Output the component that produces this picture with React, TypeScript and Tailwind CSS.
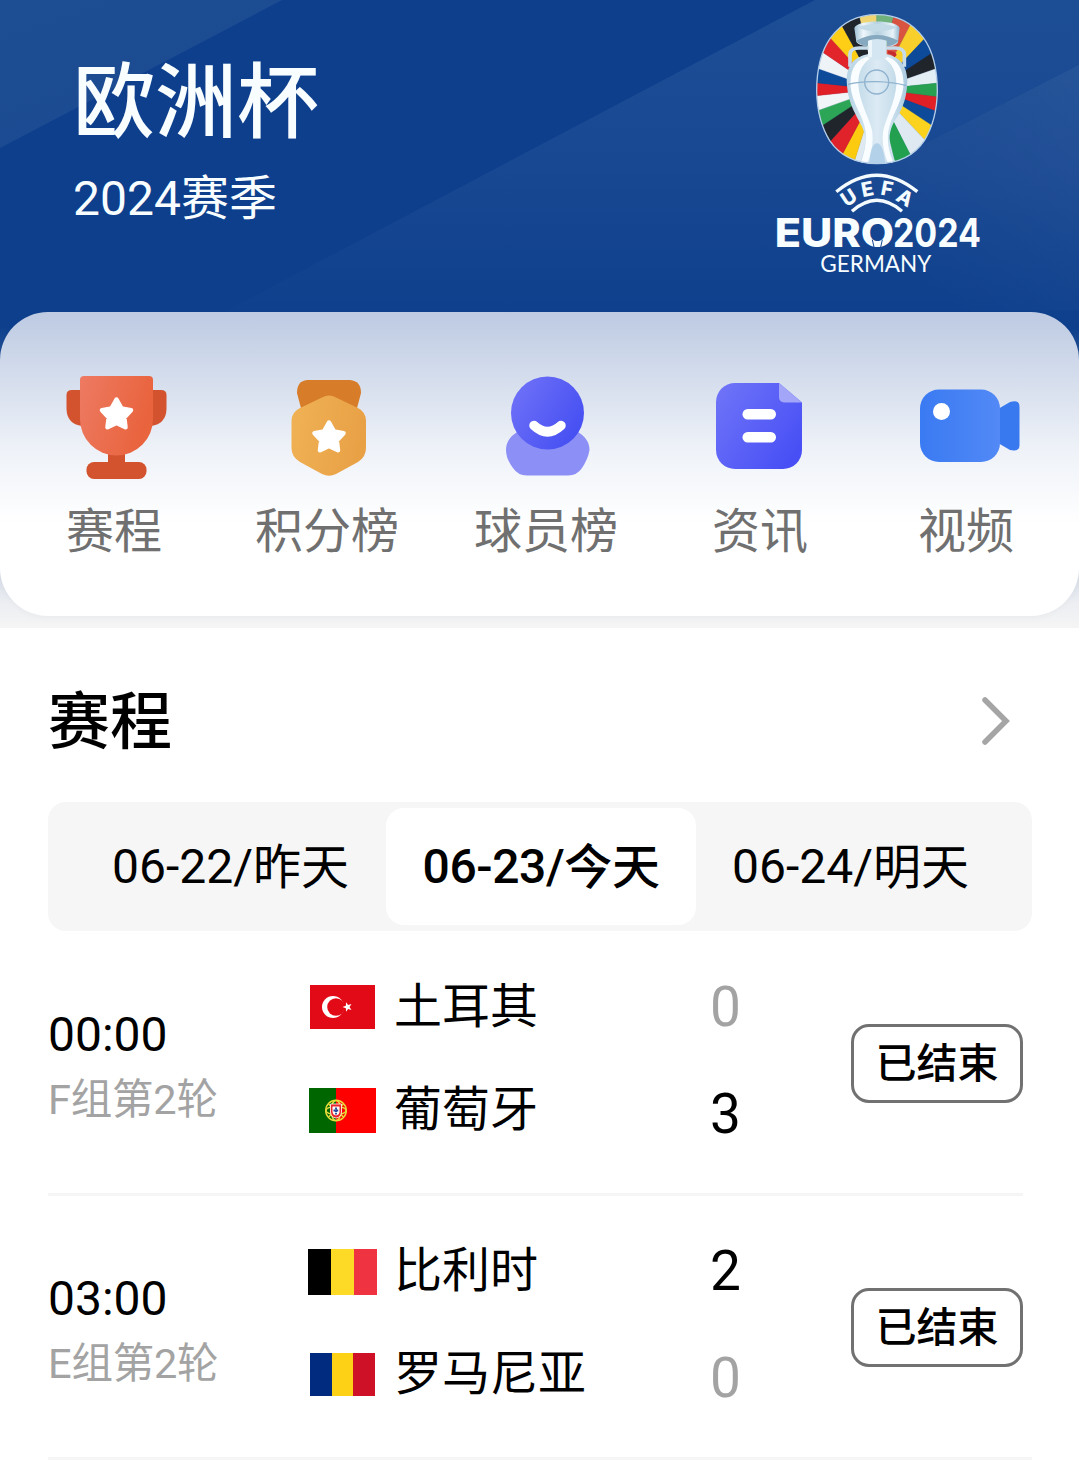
import type { ReactNode } from "react";

type Team = { name: string; score: number; flag: ReactNode };

type Match = {
  time: string;
  round: string;
  teams: Team[];
};

const STAR =
  "M0 -14.5 L4.9 -5.6 L14.5 -3.8 L7.8 3.4 L9 13.2 L0 9 L-9 13.2 L-7.8 3.4 L-14.5 -3.8 L-4.9 -5.6 Z";

function Star({ x, y }: { x: number; y: number }) {
  return (
    <path
      d={STAR}
      transform={`translate(${x} ${y})`}
      fill="#fff"
      stroke="#fff"
      strokeWidth="4.5"
      strokeLinejoin="round"
    />
  );
}

function TrophyIcon() {
  return (
    <svg className="h-[110px] w-[102px]" viewBox="66 372 102 110">
      <defs>
        <linearGradient id="cup" x1="0" y1="0" x2="1" y2="0.3">
          <stop offset="0" stopColor="#ed7a62" />
          <stop offset="1" stopColor="#e9633d" />
        </linearGradient>
      </defs>
      <rect x="108" y="450" width="17" height="16" fill="#d3532f" />
      <rect x="86.5" y="462" width="60" height="17" rx="7.5" fill="#d3532f" />
      <path d="M82 390 H72 Q66.500 390 66.500 395 V409 Q67 424 82 426 Z" fill="#d3532f" />
      <path d="M151 390 H161 Q166.500 390 166.500 395 V409 Q166 424 151 426 Z" fill="#d3532f" />
      <path d="M84 376 H149 a4 4 0 0 1 4 4 V419 a36.500 36.500 0 0 1 -73 0 V380 a4 4 0 0 1 4 -4 Z" fill="url(#cup)" />
      <Star x={116.5} y={414} />
    </svg>
  );
}

function MedalIcon() {
  return (
    <svg className="ml-[35px] h-[110px] w-[77px]" viewBox="290 372 77 110">
      <defs>
        <linearGradient id="medal" x1="0" y1="0" x2="1" y2="0.2">
          <stop offset="0" stopColor="#f0b255" />
          <stop offset="1" stopColor="#e9a146" />
        </linearGradient>
      </defs>
      <path d="M307 380 H350 Q361 381 361 393 L356 412 H302 L297 393 Q297 381 307 380 Z" fill="#d77c29" />
      <path
        d="M322 397.500 Q329 393.500 336 397.500 L358 408 Q366 412 366 421 V448 Q366 457 358 462 L336 474 Q329 477.500 322 474 L300 462 Q291.500 457 291.500 448 V421 Q291.500 412 300 408 Z"
        fill="url(#medal)"
      />
      <Star x={329} y={437} />
    </svg>
  );
}

function PlayerIcon() {
  return (
    <svg className="ml-[31px] h-[110px] w-[85px]" viewBox="505 372 85 110">
      <defs>
        <linearGradient id="face" x1="0" y1="0" x2="1" y2="0.6">
          <stop offset="0" stopColor="#7274f8" />
          <stop offset="1" stopColor="#4750f2" />
        </linearGradient>
      </defs>
      <path
        d="M519 431 H576 Q589.500 438 589.500 450 Q588 459 582 468 Q577 475.500 568 475.500 H527 Q518 475.500 513 468 Q506 459 506 450 Q506 438 519 431 Z"
        fill="#8c8ff6"
      />
      <circle cx="547.500" cy="413" r="36.500" fill="url(#face)" />
      <path d="M534 425.500 Q547.500 438 561 425.500" fill="none" stroke="#fff" strokeWidth="9.500" strokeLinecap="round" />
    </svg>
  );
}

function NewsIcon() {
  return (
    <svg className="ml-[3px] h-[110px] w-[88px]" viewBox="715 372 88 110">
      <defs>
        <linearGradient id="page" x1="0" y1="0" x2="1" y2="0.7">
          <stop offset="0" stopColor="#7175f8" />
          <stop offset="1" stopColor="#4850f5" />
        </linearGradient>
      </defs>
      <path d="M735 383 H779 L802 402.500 V450 a19 19 0 0 1 -19 19 H735 a19 19 0 0 1 -19 -19 V402 a19 19 0 0 1 19 -19 Z" fill="url(#page)" />
      <path d="M779 383 L802 402.500 H784 a5 5 0 0 1 -5 -5 Z" fill="#a2a5f8" />
      <rect x="742.500" y="409" width="33.500" height="10.500" rx="5.200" fill="#fff" />
      <rect x="742.500" y="432" width="33.500" height="10.500" rx="5.200" fill="#fff" />
    </svg>
  );
}

function VideoIcon() {
  return (
    <svg className="ml-px h-[110px] w-[101px]" viewBox="919 372 101 110">
      <defs>
        <linearGradient id="camera" x1="0" y1="0" x2="1" y2="0">
          <stop offset="0" stopColor="#3a7af2" />
          <stop offset="1" stopColor="#5289f6" />
        </linearGradient>
      </defs>
      <path d="M998 409 L1010 402 Q1019.500 399 1019.500 407 V445 Q1019.500 452 1010 450 L998 443 Z" fill="#3979ef" />
      <rect x="920" y="389.500" width="80" height="72.500" rx="19" fill="url(#camera)" />
      <circle cx="941.500" cy="411.500" r="8.500" fill="#fff" />
    </svg>
  );
}

// outer edge points of the coloured rays, clockwise, each with the ray that follows it
const RAYS: [number, number, string][] = [
  [295, 40, "#f0d673"],
  [350, 30, "#6fb27c"],
  [404, 35, "#d95440"],
  [456, 66, "#f8cf2b"],
  [505, 104, "#0d4a9a"],
  [530, 150, "#20252c"],
  [540, 202, "#e4eef5"],
  [545, 248, "#27a052"],
  [545, 292, "#e01f26"],
  [545, 340, "#0d4a9a"],
  [530, 386, "#fbd31e"],
  [500, 426, "#dfe9f1"],
  [458, 478, "#22a04f"],
  [410, 510, "#dfe9f1"],
  [275, 510, "#fccb10"],
  [240, 476, "#e0222a"],
  [205, 430, "#20252c"],
  [175, 384, "#2da556"],
  [160, 336, "#f1f5f8"],
  [160, 288, "#e01f26"],
  [160, 247, "#0d4a9a"],
  [165, 202, "#eef3f8"],
  [178, 150, "#e2252b"],
  [206, 108, "#fdce15"],
  [243, 72, "#20252c"],
];

const OVAL =
  "M351 44 C405 44 455 66 490 113 C522 157 532 215 532 274 C531 330 520 378 493 422 C462 468 418 491 351 491 C284 491 240 468 209 422 C182 378 171 330 170 274 C170 215 180 157 212 113 C247 66 297 44 351 44 Z";

function EuroLogo() {
  return (
    <svg className="h-[290px] w-[240px] shrink-0" viewBox="0 0 720 870">
      <defs>
        <clipPath id="oval">
          <path d={OVAL} />
        </clipPath>
        <linearGradient id="body" x1="0" y1="0" x2="1" y2="0">
          <stop offset="0" stopColor="#b7d3e5" />
          <stop offset="0.25" stopColor="#c9dfec" />
          <stop offset="0.5" stopColor="#dceaf4" />
          <stop offset="0.75" stopColor="#c9dfec" />
          <stop offset="1" stopColor="#abcae0" />
        </linearGradient>
        <linearGradient id="rim" x1="0" y1="0" x2="1" y2="0">
          <stop offset="0" stopColor="#9fc0d4" />
          <stop offset="0.2" stopColor="#eef7fb" />
          <stop offset="0.5" stopColor="#b4d0df" />
          <stop offset="0.85" stopColor="#e8f3f9" />
          <stop offset="1" stopColor="#8fb4cd" />
        </linearGradient>
      </defs>
      <g clipPath="url(#oval)">
        {RAYS.map(([x, y, fill], i) => {
          const [nx, ny] = RAYS[(i + 1) % RAYS.length];
          return <path key={i} d={`M351 268 L${x} ${y} L${nx} ${ny} Z`} fill={fill} stroke={fill} />;
        })}
        <path
          d="M260 240 C260 195 283 170 325 162 H378 C420 170 442 198 442 245 C440 305 422 335 400 370 C380 410 388 450 410 495 H296 C318 450 322 410 304 376 C283 335 262 305 260 240 Z"
          fill="url(#body)"
        />
        <path
          d="M330 168 C286 176 268 212 272 262 C277 312 309 345 317 394 C320 436 311 466 300 494 H320 C334 462 342 430 336 390 C324 345 300 310 295 256 C294 216 306 190 336 172 Z"
          fill="#fafdff"
        />
        <path
          d="M374 168 C416 178 434 214 430 262 C424 312 394 345 385 394 C380 434 390 466 404 494 H386 C372 462 364 430 370 390 C382 345 404 310 409 256 C410 218 398 190 368 172 Z"
          fill="#fafdff"
        />
        <path d="M328 494 C330 452 338 430 351 430 C364 430 372 452 376 494 Z" fill="#b4d1ea" />
      </g>
      <path d="M324 115 H380 V174 Q352 184 324 174 Z" fill="#d3e6f1" />
      <path d="M324 118 H336 V172 H324 Z" fill="#edf6fb" />
      <path d="M270 200 V162 Q272 144 298 144 H326 M433 200 V162 Q431 144 405 144 H378" fill="none" stroke="#c6dceb" strokeWidth="11" />
      <path d="M294 165 Q296 153 318 153 V160 Q308 162 298 172 Z" fill="#20252c" />
      <path d="M410 165 Q408 153 384 153 V160 Q396 162 404 172 Z" fill="#c52a2e" />
      <path d="M283 84 C290 58 412 58 419 84 L414 128 Q404 140 381 138 V120 Q350 112 324 120 V138 Q298 138 289 126 Z" fill="url(#rim)" />
      <path d="M292 82 Q350 60 410 82 Q350 108 292 82 Z" fill="#c3dae7" />
      <path d="M289 122 Q350 88 415 122 Q400 140 381 138 V122 Q350 112 324 122 V138 Q301 138 289 122 Z" fill="#86a9c0" />
      <g fill="none" stroke="#8fb2cf" strokeWidth="4">
        <circle cx="350" cy="246" r="36" />
        <path d="M264 253 Q300 244 350 245 Q400 246 439 257" />
      </g>
      <path d={OVAL} fill="none" stroke="#b5cfe9" strokeWidth="4" />

      <g fill="none" stroke="#f4fbff" strokeWidth="10">
        <path d="M229 575 Q350 476 472 575" />
        <path d="M276 634 Q350 568 426 634" />
      </g>
      <g fill="#f4fbff" textAnchor="middle" className="font-['Inter'] text-[60px] font-extrabold">
        <text transform="translate(278 611) rotate(-33)">U</text>
        <text transform="translate(326 588) rotate(-11)">E</text>
        <text transform="translate(377 587) rotate(11)">F</text>
        <text transform="translate(424 611) rotate(31)">A</text>
      </g>
      <g fill="#f8fdff">
        <text x="44" y="741" textLength="358" lengthAdjust="spacingAndGlyphs" className="font-['Inter'] text-[118px] font-extrabold">
          EURO
        </text>
        <text x="399" y="741" textLength="264" lengthAdjust="spacingAndGlyphs" className="font-['Inter'] text-[118px] font-bold">
          2024
        </text>
        <text x="181" y="816" textLength="333" lengthAdjust="spacingAndGlyphs" className="font-['Lato'] text-[67px]">
          GERMANY
        </text>
      </g>
      <path d="M337 719 L343 746 M367 719 L361 746" stroke="#184892" strokeWidth="3" />
    </svg>
  );
}

function TurkeyFlag() {
  return (
    <svg className="h-[44px] w-[65px]" viewBox="0 0 65 44">
      <rect width="65" height="44" fill="#e30a17" />
      <circle cx="23" cy="22" r="11" fill="#fff" />
      <circle cx="26" cy="22" r="8.800" fill="#e30a17" />
      <path d="M0 -5 L1.200 -1.600 L4.800 -1.500 L2 0.600 L2.900 4 L0 2 L-2.900 4 L-2 0.600 L-4.800 -1.500 L-1.200 -1.600 Z" transform="translate(37.500 22) rotate(-90)" fill="#fff" />
    </svg>
  );
}

function PortugalFlag() {
  return (
    <svg className="h-[45px] w-[67px]" viewBox="0 0 67 45">
      <rect width="67" height="45" fill="#fe0000" />
      <rect width="27" height="45" fill="#006600" />
      <g fill="none" stroke="#e6dc3c" strokeWidth="1.400">
        <circle cx="27" cy="22.500" r="10.300" />
        <ellipse cx="27" cy="22.500" rx="10" ry="4" />
        <ellipse cx="27" cy="22.500" rx="5" ry="10" />
        <path d="M19.500 16 L34.500 29 M34.500 16 L19.500 29" />
      </g>
      <path d="M21.500 16 H32.500 V24 Q32 29.500 27 30 Q22 29.500 21.500 24 Z" fill="#e8242a" stroke="#fff" strokeWidth="0.800" />
      <path d="M23.500 18.500 H30.500 V24 Q30 27 27 27.500 Q24 27 23.500 24 Z" fill="#fff" />
      <path d="M27 19.500 V26.500 M24.500 22.500 H29.500" stroke="#1b3f94" strokeWidth="1.800" strokeDasharray="2 0.700" />
    </svg>
  );
}

function BelgiumFlag() {
  return (
    <div className="mt-[2px] flex h-[46px] w-[69px]">
      <div className="flex-1 bg-black" />
      <div className="flex-1 bg-[#fdda25]" />
      <div className="flex-1 bg-[#f03340]" />
    </div>
  );
}

function RomaniaFlag() {
  return (
    <div className="flex h-[43px] w-[65px]">
      <div className="flex-1 bg-[#002b7f]" />
      <div className="flex-1 bg-[#fcd116]" />
      <div className="flex-1 bg-[#ce1126]" />
    </div>
  );
}

const NAV = [
  { label: "赛程", icon: <TrophyIcon />, className: "w-[102px]" },
  { label: "积分榜", icon: <MedalIcon />, className: "ml-[87px] w-[144px]" },
  { label: "球员榜", icon: <PlayerIcon />, className: "ml-[75px] w-[144px]" },
  { label: "资讯", icon: <NewsIcon />, className: "ml-[94px] w-[96px]" },
  { label: "视频", icon: <VideoIcon />, className: "ml-[110px] w-[102px]" },
];

const DAYS = [
  { date: "06-22/", label: "昨天" },
  { date: "06-23/", label: "今天" },
  { date: "06-24/", label: "明天" },
];

const MATCHES: Match[] = [
  {
    time: "00:00",
    round: "F组第2轮",
    teams: [
      { name: "土耳其", score: 0, flag: <TurkeyFlag /> },
      { name: "葡萄牙", score: 3, flag: <PortugalFlag /> },
    ],
  },
  {
    time: "03:00",
    round: "E组第2轮",
    teams: [
      { name: "比利时", score: 2, flag: <BelgiumFlag /> },
      { name: "罗马尼亚", score: 0, flag: <RomaniaFlag /> },
    ],
  },
];

function HeaderRays() {
  return (
    <svg className="absolute inset-0 h-[628px] w-full" viewBox="0 0 1079 628" preserveAspectRatio="none">
      <defs>
        <linearGradient id="base" x1="0" y1="0" x2="0" y2="1">
          <stop offset="0" stopColor="#0d3f8c" />
          <stop offset="0.52" stopColor="#0d3f8c" />
          <stop offset="0.9" stopColor="#ced6e5" />
          <stop offset="0.96" stopColor="#eceef2" />
          <stop offset="1" stopColor="#f5f5f5" />
        </linearGradient>
        <linearGradient id="beamLeft" x1="0" y1="0" x2="0.6" y2="1">
          <stop offset="0" stopColor="#1d4d92" />
          <stop offset="1" stopColor="#1b4a92" />
        </linearGradient>
        <linearGradient id="beamRight" x1="0" y1="0" x2="0" y2="1">
          <stop offset="0" stopColor="#1c4e95" />
          <stop offset="0.5" stopColor="#194892" />
          <stop offset="1" stopColor="#0d3f8c" />
        </linearGradient>
        <linearGradient id="beamEdge" gradientUnits="userSpaceOnUse" x1="1079" y1="70" x2="900" y2="270">
          <stop offset="0" stopColor="#fff" stopOpacity="0.05" />
          <stop offset="1" stopColor="#fff" stopOpacity="0" />
        </linearGradient>
      </defs>
      <rect width="1079" height="628" fill="url(#base)" />
      <path d="M0 0 H282 L0 148 Z" fill="url(#beamLeft)" />
      <path d="M815 0 H1079 V330 H190 Z" fill="url(#beamRight)" />
      <path d="M1079 65 V310 H600 Z" fill="url(#beamEdge)" />
    </svg>
  );
}

function MatchRow({ match }: { match: Match }) {
  return (
    <div className="flex h-[264px] items-start">
      <div className="w-[260px] pt-[74px]">
        <div className="h-[60px] text-[48px] leading-[60px]">{match.time}</div>
        <div className="mt-[5px] h-[60px] text-[41.5px] leading-[60px] tracking-[-0.2px] text-[#a3a3a3]">{match.round}</div>
      </div>
      <div className="w-[402px] pt-[46px]">
        {match.teams.map((team) => (
          <div key={team.name} className="flex h-[103px] items-start">
            <div className="flex h-[60px] w-[69px] items-center justify-center">{team.flag}</div>
            <div className="ml-[17px] text-[48px] leading-[60px]">{team.name}</div>
          </div>
        ))}
      </div>
      <div className="w-[53px] pt-[46px]">
        {match.teams.map((team) => (
          <div
            key={team.name}
            className={`h-[107px] text-[55px] leading-[60px] ${team.score === 0 ? "text-[#a3a3a3]" : ""}`}
          >
            {team.score}
          </div>
        ))}
      </div>
      <div className="ml-[88px] mt-[93px] flex h-[79px] w-[172px] items-center justify-center rounded-[18px] border-[3px] border-[#717171] pt-[2px] text-[41px] font-medium">
        已结束
      </div>
    </div>
  );
}

export default function App() {
  return (
    <main className="h-[1465px] w-[1079px] overflow-hidden bg-white font-['Roboto','Noto_Sans_CJK_SC',sans-serif] text-black" lang="zh-CN">
      <header className="relative h-[628px]">
        <HeaderRays />
        <div className="relative">
          <div className="flex h-[312px] items-start pl-[73px] text-[#f8fdff]">
            <div className="w-[687px]">
              <h1 className="mt-[55px] h-[96px] text-[82px] font-medium leading-[96px]">欧洲杯</h1>
              <p className="mt-[18px] text-[48px] leading-[60px]">2024赛季</p>
            </div>
            <EuroLogo />
          </div>
          <nav className="flex h-[304px] rounded-[48px] bg-linear-to-b from-[#bdcae2] via-[#eef2f8] via-45% to-white to-70% pl-[66px] pt-[60px] shadow-[0_2px_6px_rgba(0,0,0,0.03)]">
            {NAV.map((item) => (
              <div key={item.label} className={`flex flex-col items-start ${item.className}`}>
                {item.icon}
                <span className="mt-[20px] whitespace-nowrap text-[48px] leading-[60px] text-[#707070]">{item.label}</span>
              </div>
            ))}
          </nav>
        </div>
      </header>

      <section className="px-12">
        <div className="flex h-[174px] items-center justify-between pr-[20px] pt-[12px]">
          <h2 className="pt-[4px] text-[62px] font-medium leading-[80px]">赛程</h2>
          <svg className="h-[50px] w-[30px]" viewBox="0 0 30 50" fill="none" stroke="#a5a5a5" strokeWidth="5.5" strokeLinecap="round">
            <path d="M4 4 L25 25 L4 46" />
          </svg>
        </div>

        <div className="flex h-[129px] w-[984px] items-center rounded-[18px] bg-[#f6f6f6] pl-[28px] pr-[26px]">
          {DAYS.map((day, i) => (
            <button
              key={day.date}
              className={`flex h-[117px] w-[310px] items-center justify-center rounded-[18px] text-[48px] ${i === 1 ? "bg-white font-medium tracking-[-0.4px]" : "pr-px"}`}
            >
              <span>{day.date}</span>
              <span className="pt-[3px]">{day.label}</span>
            </button>
          ))}
        </div>

        {MATCHES.map((match, i) => (
          <div key={match.time}>
            <MatchRow match={match} />
            <div className={`-mb-px -mt-[2px] h-[3px] bg-[#f5f5f5] ${i === MATCHES.length - 1 ? "w-[984px]" : "w-[975px]"}`} />
          </div>
        ))}
      </section>
    </main>
  );
}
